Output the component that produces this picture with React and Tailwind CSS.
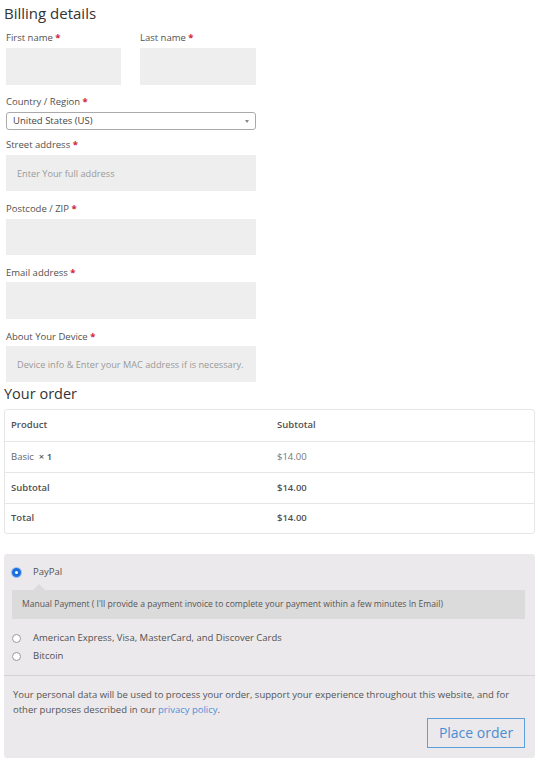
import { useState } from "react";

const Label = ({ children, className = "" }) => (
  <label className={`block text-[9.5px] leading-[14px] text-[#515151] ${className}`}>
    {children} <span className="text-[#d0213b] font-bold">*</span>
  </label>
);

const Field = ({ className = "", placeholder = "", h = "h-[36px]" }) => (
  <input
    className={`block w-full ${h} bg-[#eeeeee] border-0 outline-none pl-[11px] pr-[2px] text-[9.2px] text-[#555] placeholder:text-[#9a9a9a] ${className}`}
    placeholder={placeholder}
  />
);

const Radio = ({ checked, onChange }) => (
  <span
    onClick={onChange}
    className={`inline-block w-[9px] h-[9px] rounded-full shrink-0 ${
      checked
        ? "bg-white border-[3px] border-[#1a6fe0] shadow-[0_0_0_1px_#9fc0ee]"
        : "bg-white border border-[#9a9a9a]"
    }`}
  />
);

export default function App() {
  const [method, setMethod] = useState("paypal");

  return (
    <div className="w-[539px] bg-white px-[4px] pb-[6px] font-['Open_Sans',sans-serif] text-[#515151]">
      <h3 className="text-[15px] leading-[26px] text-[#333]">Billing details</h3>

      <div className="w-[250px] ml-[2px]">
        <div className="flex gap-[19px] mt-[5px]">
          <div className="w-[115px]">
            <Label>First name</Label>
            <Field className="mt-[3px]" h="h-[37px]" />
          </div>
          <div className="w-[116px]">
            <Label>Last name</Label>
            <Field className="mt-[3px]" h="h-[37px]" />
          </div>
        </div>

        <Label className="mt-[10px]">Country / Region</Label>
        <div className="relative mt-[3px] h-[18px] border border-[#aaa] rounded-[3px] bg-white">
          <span className="absolute left-[6px] top-0 text-[9.5px] leading-[16px] text-[#444]">
            United States (US)
          </span>
          <span className="absolute right-[6px] top-[7px] w-0 h-0 border-l-[2px] border-r-[2px] border-t-[3px] border-l-transparent border-r-transparent border-t-[#888]" />
        </div>

        <Label className="mt-[8px]">Street address</Label>
        <Field className="mt-[3px]" placeholder="Enter Your full address" />

        <Label className="mt-[11px]">Postcode / ZIP</Label>
        <Field className="mt-[3px]" />

        <Label className="mt-[11px]">Email address</Label>
        <Field className="mt-[2px]" h="h-[37px]" />

        <Label className="mt-[11px]">About Your Device</Label>
        <Field className="mt-[2px]" placeholder="Device info & Enter your MAC address if is necessary." />
      </div>

      <h3 className="text-[14.5px] leading-[24px] text-[#333]">Your order</h3>

      <div className="mt-[3px] border border-[#e6e6e6] rounded-[3px] text-[9.5px]">
        <div className="flex h-[31px] items-center font-semibold text-[#515151]">
          <div className="w-[272px] pl-[6px]">Product</div>
          <div>Subtotal</div>
        </div>
        <div className="flex h-[31px] items-center border-t border-[#e6e6e6] text-[#666]">
          <div className="w-[272px] pl-[6px]">
            Basic <span className="font-semibold text-[#515151]">&nbsp;× 1</span>
          </div>
          <div className="text-[#777]">$14.00</div>
        </div>
        <div className="flex h-[31px] items-center border-t border-[#e6e6e6] font-semibold">
          <div className="w-[272px] pl-[6px]">Subtotal</div>
          <div>$14.00</div>
        </div>
        <div className="flex h-[30px] items-center border-t border-[#e6e6e6] font-semibold">
          <div className="w-[272px] pl-[6px]">Total</div>
          <div>$14.00</div>
        </div>
      </div>

      <div className="mt-[20px] bg-[#ebe9eb] rounded-[3px] text-[9.5px]">
        <div className="pt-[12px] pl-[8px] pr-[10px] pb-[8px]">
          <div className="flex items-center h-[12px]">
            <Radio checked={method === "paypal"} onChange={() => setMethod("paypal")} />
            <span className="ml-[12px]">PayPal</span>
          </div>
          <div className="relative mt-[12px] bg-[#dcdbdc] h-[29px] flex items-center pl-[10px] text-[8.6px] text-[#555]">
            <span className="absolute -top-[6px] left-[21px] w-0 h-0 border-l-[6px] border-r-[6px] border-b-[6px] border-l-transparent border-r-transparent border-b-[#dcdbdc]" />
            Manual Payment ( I'll provide a payment invoice to complete your payment within a few minutes In Email)
          </div>
          <div className="flex items-center h-[12px] mt-[13px]">
            <Radio checked={method === "card"} onChange={() => setMethod("card")} />
            <span className="ml-[12px]">American Express, Visa, MasterCard, and Discover Cards</span>
          </div>
          <div className="flex items-center h-[12px] mt-[6px]">
            <Radio checked={method === "btc"} onChange={() => setMethod("btc")} />
            <span className="ml-[12px]">Bitcoin</span>
          </div>
        </div>
        <div className="border-t border-[#d4d3d4] mt-[5px] px-[9px] pt-[11px] pb-[10px]">
          <p className="leading-[15px] text-[#555]">
            Your personal data will be used to process your order, support your experience throughout this website, and for other purposes described in our{" "}
            <a className="text-[#4f8fd8]">privacy policy</a>.
          </p>
          <div className="flex justify-end mt-[1px] pr-[1px]">
            <button className="w-[98px] h-[30px] border border-[#5b9fdb] text-[#4a8ed4] text-[14px] leading-none">
              Place order
            </button>
          </div>
        </div>
      </div>
    </div>
  );
}
